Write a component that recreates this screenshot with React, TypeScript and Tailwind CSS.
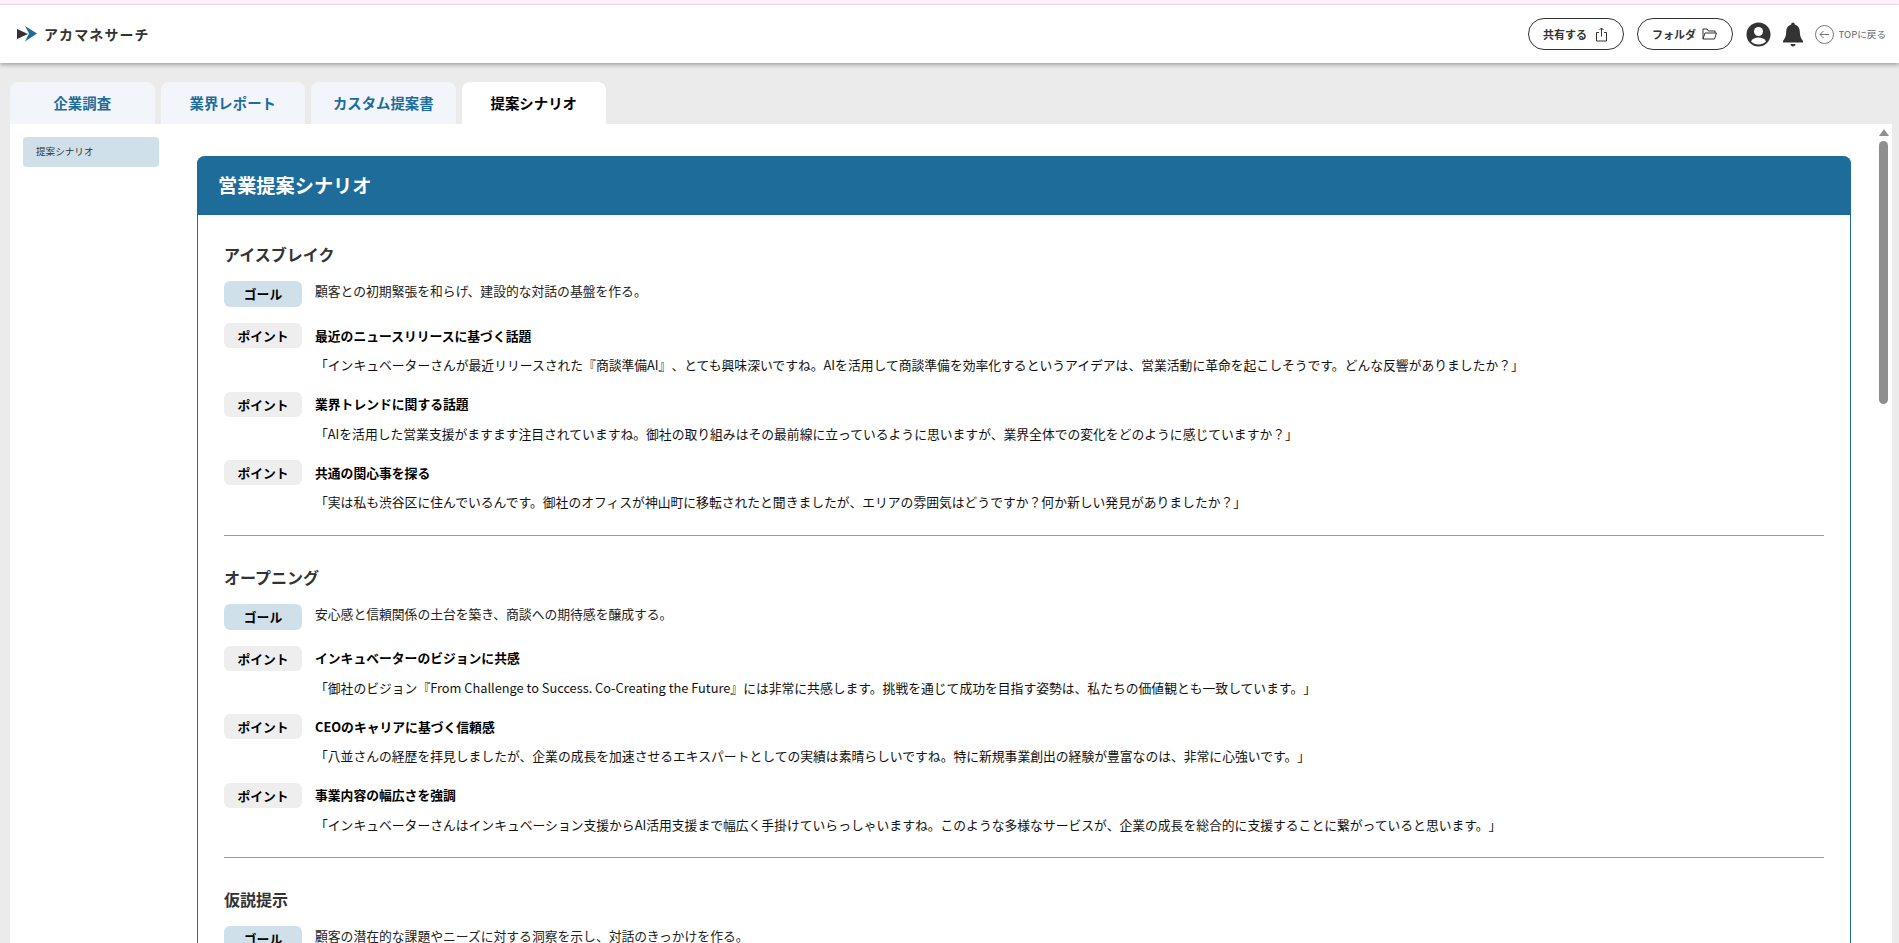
import React from "react";

const FONT = { fontFamily: '"Noto Sans CJK JP", "Noto Sans", sans-serif' };

type Point = { title: string; quote: string };
type Section = { title: string; goal: string; points: Point[] };

const sections: Section[] = [
  {
    title: "アイスブレイク",
    goal: "顧客との初期緊張を和らげ、建設的な対話の基盤を作る。",
    points: [
      { title: "最近のニュースリリースに基づく話題", quote: "「インキュベーターさんが最近リリースされた『商談準備AI』、とても興味深いですね。AIを活用して商談準備を効率化するというアイデアは、営業活動に革命を起こしそうです。どんな反響がありましたか？」" },
      { title: "業界トレンドに関する話題", quote: "「AIを活用した営業支援がますます注目されていますね。御社の取り組みはその最前線に立っているように思いますが、業界全体での変化をどのように感じていますか？」" },
      { title: "共通の関心事を探る", quote: "「実は私も渋谷区に住んでいるんです。御社のオフィスが神山町に移転されたと聞きましたが、エリアの雰囲気はどうですか？何か新しい発見がありましたか？」" },
    ],
  },
  {
    title: "オープニング",
    goal: "安心感と信頼関係の土台を築き、商談への期待感を醸成する。",
    points: [
      { title: "インキュベーターのビジョンに共感", quote: "「御社のビジョン『From Challenge to Success. Co-Creating the Future』には非常に共感します。挑戦を通じて成功を目指す姿勢は、私たちの価値観とも一致しています。」" },
      { title: "CEOのキャリアに基づく信頼感", quote: "「八並さんの経歴を拝見しましたが、企業の成長を加速させるエキスパートとしての実績は素晴らしいですね。特に新規事業創出の経験が豊富なのは、非常に心強いです。」" },
      { title: "事業内容の幅広さを強調", quote: "「インキュベーターさんはインキュベーション支援からAI活用支援まで幅広く手掛けていらっしゃいますね。このような多様なサービスが、企業の成長を総合的に支援することに繋がっていると思います。」" },
    ],
  },
  {
    title: "仮説提示",
    goal: "顧客の潜在的な課題やニーズに対する洞察を示し、対話のきっかけを作る。",
    points: [],
  },
];

function Logo() {
  return (
    <svg width="20" height="16" viewBox="0 0 20 16" className="shrink-0">
      <path d="M0 3 L11 8 L0 13 Z" fill="#333333" />
      <path d="M8 0 L20 7.5 L8 15.5 L12 7.5 Z" fill="#1d6c99" />
    </svg>
  );
}

function SectionBlock({ s, last }: { s: Section; last: boolean }) {
  return (
    <div className={last ? "" : "border-b border-[#999999] pb-[6px] mb-[29px]"}>
      <h3 className="text-[16px] leading-[24px] font-bold text-[#333333] mb-[15px]">{s.title}</h3>
      <div className="flex items-start mb-[16px]">
        <span className="w-[78px] h-[26px] shrink-0 rounded-[6px] bg-[#d0e0ea] text-[12.8px] leading-[26px] font-bold text-center text-black">ゴール</span>
        <p className="ml-[13px] text-[12.8px] leading-[20px] text-[#222222] [text-spacing-trim:space-all]">{s.goal}</p>
      </div>
      {s.points.map((p) => (
        <div key={p.title} className="mb-[14.5px]">
          <div className="flex items-center h-[25px]">
            <span className="w-[78px] h-[25px] shrink-0 rounded-[6px] bg-[#eeeeee] text-[12.8px] leading-[25px] font-bold text-center text-black">ポイント</span>
            <p className="ml-[13px] text-[12.8px] font-bold text-black [text-spacing-trim:space-all]">{p.title}</p>
          </div>
          <p className="ml-[91px] mt-[4px] text-[12.8px] leading-[25px] text-[#111111] [text-spacing-trim:space-all]">{p.quote}</p>
        </div>
      ))}
    </div>
  );
}

export default function App() {
  const tabs = ["企業調査", "業界レポート", "カスタム提案書"];
  return (
    <div style={FONT} className="h-[943px] w-full overflow-hidden bg-[#ebebeb] flex flex-col">
      <div className="h-[5px] bg-[#fdf2fb] border-b border-[#f3dff0]" />
      <header className="relative z-10 h-[58px] shrink-0 bg-white shadow-[0_2px_4px_rgba(0,0,0,0.3)] flex items-center pl-[17px] pr-[13px]">
        <Logo />
        <span className="ml-[7px] text-[14px] font-bold tracking-[1.1px] text-[#333333]">アカマネサーチ</span>
        <div className="ml-auto flex items-center">
          <button className="w-[96px] h-[32px] rounded-full border border-[#333333] bg-white flex items-center justify-center gap-[8px] text-[11px] font-bold text-[#333333]">
            共有する
            <svg width="13" height="15" viewBox="0 0 13 15" fill="none" stroke="#333333" strokeWidth="1">
              <path d="M4 5.5H1.5V14H11.5V5.5H9" />
              <path d="M6.5 9.5V1M4.5 3L6.5 1L8.5 3" />
            </svg>
          </button>
          <button className="ml-[13px] w-[96px] h-[32px] rounded-full border border-[#333333] bg-white flex items-center justify-center gap-[6px] text-[11px] font-bold text-[#333333]">
            フォルダ
            <svg width="15" height="12" viewBox="0 0 15 12" fill="none" stroke="#333333" strokeWidth="1">
              <path d="M1 11V1H5L6.5 3H13V5" />
              <path d="M1 11L3 5H14.5L12.5 11Z" />
            </svg>
          </button>
          <svg width="25" height="25" viewBox="0 0 25 25" className="ml-[13px]">
            <circle cx="12.5" cy="12.5" r="12" fill="#333333" />
            <circle cx="12.5" cy="9.5" r="4.5" fill="#ffffff" />
            <path d="M5 19.5C6.5 16.5 9 15.5 12.5 15.5C16 15.5 18.5 16.5 20 19.5C18 21.5 15.5 22.5 12.5 22.5C9.5 22.5 7 21.5 5 19.5Z" fill="#ffffff" />
          </svg>
          <svg width="22" height="25" viewBox="0 0 22 25" className="ml-[11px]">
            <path d="M11 0.5C12 0.5 12.8 1.3 12.8 2.4C16 3.2 17.8 6 17.8 9.5C17.8 14 19 16.5 21 19V20.5H1V19C3 16.5 4.2 14 4.2 9.5C4.2 6 6 3.2 9.2 2.4C9.2 1.3 10 0.5 11 0.5Z" fill="#333333" />
            <path d="M8.5 22H13.5C13.5 23.5 12.4 24.5 11 24.5C9.6 24.5 8.5 23.5 8.5 22Z" fill="#333333" />
          </svg>
          <svg width="19" height="19" viewBox="0 0 19 19" fill="none" stroke="#555555" strokeWidth="0.8" className="ml-[11px]">
            <circle cx="9.5" cy="9.5" r="9" />
            <path d="M14 9.5H5M8.5 6L5 9.5L8.5 13" />
          </svg>
          <span className="ml-[5px] text-[9.6px] text-[#666666]">TOPに戻る</span>
        </div>
      </header>

      <div className="flex-1 min-h-0 flex flex-col pl-[10px] pr-[7px] pt-[19px]">
        <nav className="flex gap-[6px] h-[42px] shrink-0">
          {tabs.map((t) => (
            <div key={t} className="w-[144.5px] rounded-t-[8px] bg-[#f2f5f9] flex items-center justify-center text-[14.4px] font-bold text-[#1d6c99]">
              {t}
            </div>
          ))}
          <div className="w-[144.5px] rounded-t-[8px] bg-white flex items-center justify-center text-[14.4px] font-bold text-black">提案シナリオ</div>
        </nav>

        <div className="flex-1 min-h-0 bg-white flex">
          <aside className="w-[187px] shrink-0 pt-[13px] pl-[13px]">
            <div className="w-[136px] h-[30px] rounded-[4px] bg-[#d0e0ea] flex items-center pl-[13px] pb-[2px] text-[9.6px] text-[#333333]">提案シナリオ</div>
          </aside>
          <main className="flex-1 min-w-0 overflow-hidden pt-[32px]">
            <div className="w-[1654px] rounded-t-[8px] border border-t-0 border-[#1d6c99]">
              <div className="h-[59px] -mx-px bg-[#1d6c99] rounded-t-[8px] flex items-center pl-[21px] text-[19.2px] font-bold text-white">営業提案シナリオ</div>
              <div className="pt-[27px] px-[26px]">
                {sections.map((s, i) => (
                  <SectionBlock key={s.title} s={s} last={i === sections.length - 1} />
                ))}
              </div>
            </div>
          </main>
          <div className="w-[15px] shrink-0 flex flex-col items-center pt-[5px] pr-[2px]">
            <div className="w-0 h-0 border-l-[5px] border-r-[5px] border-b-[7px] border-l-transparent border-r-transparent border-b-[#8f8f8f]" />
            <div className="mt-[5px] w-[9px] h-[263px] rounded-full bg-[#8f8f8f]" />
          </div>
        </div>
      </div>
    </div>
  );
}
